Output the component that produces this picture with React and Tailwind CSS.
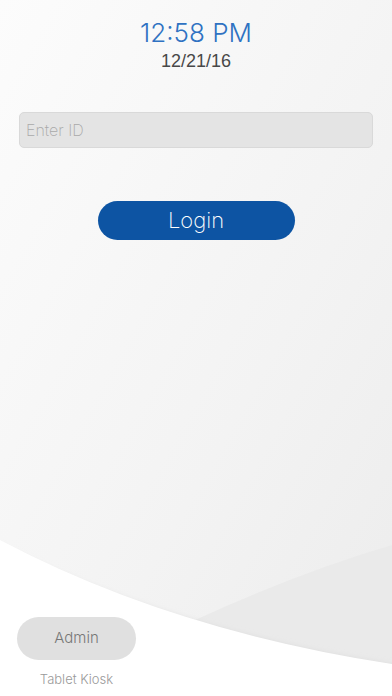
import React from 'react';

const Backdrop = () => (
  <svg className="absolute inset-0 w-full h-full" viewBox="0 0 392 696" preserveAspectRatio="none">
    <defs>
      <linearGradient id="bg" x1="0" y1="0" x2="1" y2="1">
        <stop offset="0" stopColor="#fcfcfc" />
        <stop offset="0.6" stopColor="#f3f3f3" />
        <stop offset="1" stopColor="#ececec" />
      </linearGradient>
      <filter id="soft" x="-10%" y="-10%" width="120%" height="120%">
        <feGaussianBlur stdDeviation="3" />
      </filter>
    </defs>
    <rect width="392" height="696" fill="url(#bg)" />
    {/* darker wedge at lower right */}
    <path d="M195,620 Q300,572 392,545 L392,696 L195,696 Z" fill="#eaeaea" />
    {/* soft shadow along the edge */}
    <path d="M-10,542 Q170,632 400,667 L400,700 L-10,700 Z" fill="#d6d6d6" filter="url(#soft)" />
    {/* white bottom sweep */}
    <path d="M0,540 Q170,630 392,664 L392,696 L0,696 Z" fill="#ffffff" />
  </svg>
);

export default function App() {
  return (
    <div className="relative w-[392px] h-[696px] overflow-hidden bg-white" style={{ fontFamily: 'Inter, "Liberation Sans", sans-serif' }}>
      <Backdrop />

      <div className="relative flex flex-col items-center">
        <div className="mt-[16px] text-[26px] leading-[34px] font-light text-[#2f72c2]">12:58 PM</div>
        <div className="mt-[1px] text-[18px] leading-[20px] text-[#484848]" style={{ fontFamily: '"Liberation Sans", sans-serif' }}>12/21/16</div>

        <div className="mt-[41px] w-[354px] h-[36px] rounded-[5px] bg-[#e4e4e4] border border-[#d9d9d9] flex items-center px-[6px]">
          <span className="text-[16px] font-extralight text-[#a9a9a9]">Enter ID</span>
        </div>

        <button className="mt-[53px] w-[197px] h-[39px] rounded-full bg-[#0d54a3] text-white text-[22px] font-extralight">
          Login
        </button>
      </div>

      <div className="absolute left-[17px] top-[617px] flex flex-col items-center">
        <button className="w-[119px] h-[43px] rounded-full bg-[#e0e0e0] text-[#777] text-[15px] font-light">Admin</button>
        <div className="mt-[10px] text-[13px] font-light text-[#9a9a9a]">Tablet Kiosk</div>
      </div>
    </div>
  );
}
